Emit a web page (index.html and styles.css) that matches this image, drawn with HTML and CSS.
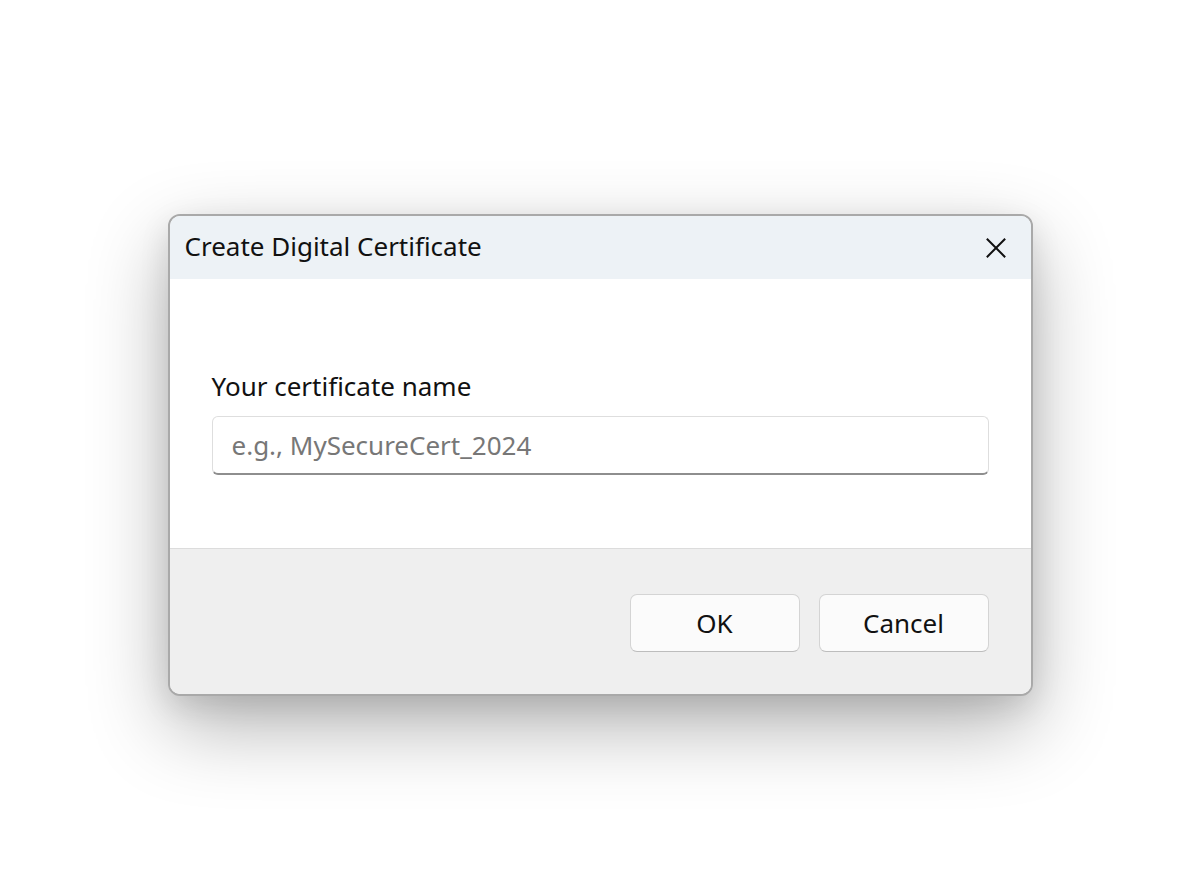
FILE: index.html
```html
<!DOCTYPE html>
<html lang="en">
<head>
    <meta charset="UTF-8">
    <title>Create Digital Certificate</title>
    <link rel="stylesheet" href="styles.css">
</head>
<body>
    <div class="dialog">
        <div class="titlebar">
            <span class="title">Create Digital Certificate</span>
            <button class="close-btn" aria-label="Close">
                <svg width="24" height="24" viewBox="0 0 24 24" class="icon">
                    <path d="M2 2 L22 22 M22 2 L2 22" stroke="currentColor" stroke-width="2.2" fill="none"/>
                </svg>
            </button>
        </div>
        <div class="content">
            <label class="field-label" for="certName">Your certificate name</label>
            <input id="certName" class="field-input" type="text" placeholder="e.g., MySecureCert_2024">
        </div>
        <div class="footer">
            <button class="btn">OK</button>
            <button class="btn">Cancel</button>
        </div>
    </div>
</body>
</html>
```

FILE: styles.css
```css
:root {
    --page-bg: #ffffff;
    --title-bg: #edf2f6;
    --footer-bg: #efefef;
    --border: #a9a9a9;
    --text: #111;
    --placeholder: #777;
    --radius: 12px;
}
html, body {
    margin: 0;
    padding: 0;
    background: var(--page-bg);
    font-family: 'Noto Sans', 'Open Sans', Arial, sans-serif;
    color: var(--text);
}
body {
    display: flex;
    justify-content: center;
    padding-top: 214px;
    min-height: 896px;
    box-sizing: border-box;
}
.dialog {
    width: 865px;
    box-sizing: border-box;
    border: 2px solid var(--border);
    border-radius: var(--radius);
    overflow: hidden;
    background: #fff;
    box-shadow: 0 30px 80px rgba(0,0,0,0.30), 0 10px 30px rgba(0,0,0,0.10);
    align-self: flex-start;
}
.titlebar {
    height: 63px;
    background: var(--title-bg);
    display: flex;
    align-items: center;
    justify-content: space-between;
    padding: 0 24px 0 15px;
}
.title {
    font-size: 26px;
    line-height: 32px;
    margin-top: -3px;
}
.close-btn {
    background: none;
    border: none;
    padding: 0;
    color: #111;
    display: flex;
    cursor: pointer;
}
.icon {
    width: 22px;
    height: 22px;
}
.content {
    display: flex;
    flex-direction: column;
    padding: 91px 42px 73px 42px;
    border-bottom: 1px solid #dcdcdc;
}
.field-label {
    font-size: 26px;
    line-height: 32px;
    margin-bottom: 14px;
}
.field-input {
    height: 59px;
    box-sizing: border-box;
    border: 1px solid #dedede;
    border-bottom: 2px solid #8e8e8e;
    border-radius: 6px;
    padding: 0 19px;
    font-family: inherit;
    font-size: 26px;
    color: var(--text);
    outline: none;
}
.field-input::placeholder {
    color: var(--placeholder);
}
.footer {
    background: var(--footer-bg);
    display: flex;
    justify-content: flex-end;
    gap: 19px;
    padding: 45px 42px 42px 0;
}
.btn {
    width: 170px;
    height: 58px;
    background: #fbfbfb;
    border: 1px solid #d4d4d4;
    border-bottom-color: #bdbdbd;
    border-radius: 7px;
    font-family: inherit;
    font-size: 26px;
    color: var(--text);
    cursor: pointer;
}
```
